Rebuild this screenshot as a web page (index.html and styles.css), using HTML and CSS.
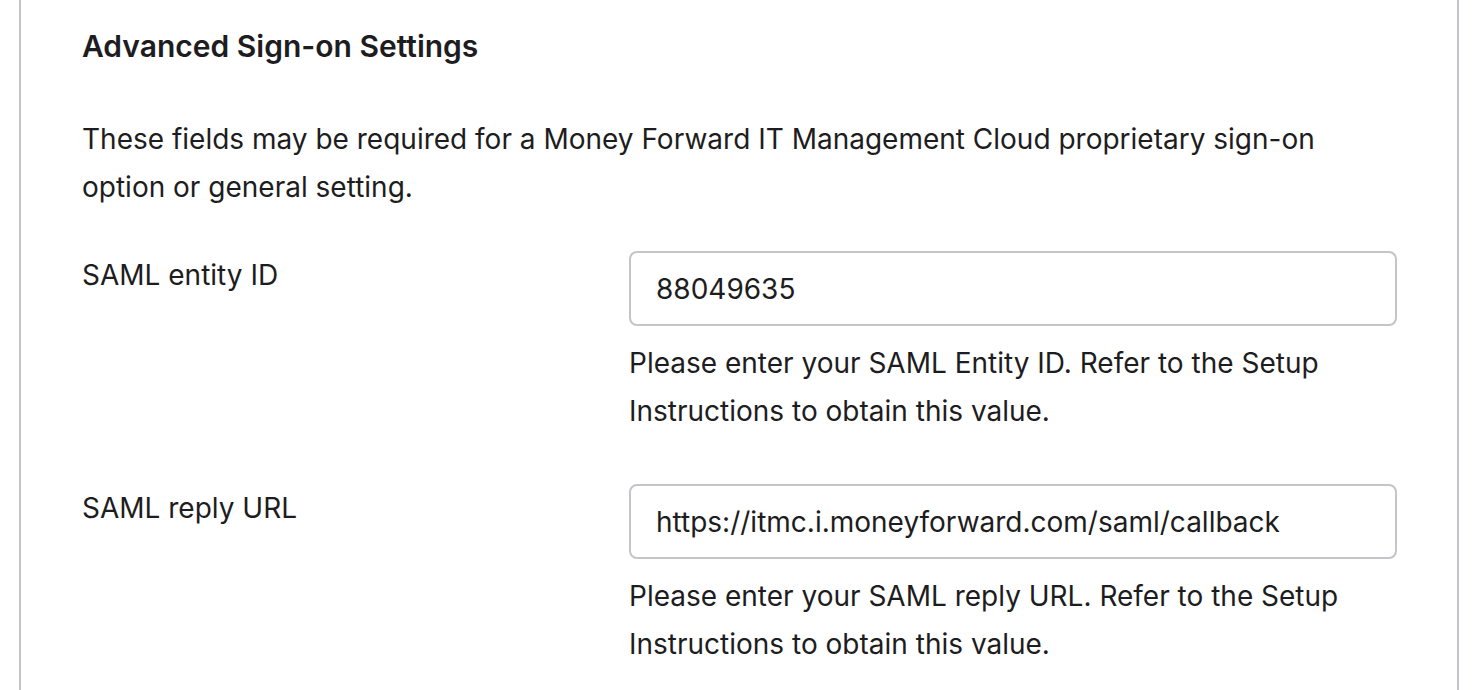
FILE: index.html
```html
<!DOCTYPE html>
<html lang="en">
<head>
    <meta charset="UTF-8">
    <meta name="viewport" content="width=device-width, initial-scale=1.0">
    <title>Advanced Sign-on Settings</title>
    <link rel="stylesheet" href="styles.css">
</head>
<body>
    <div class="panel">
        <h2>Advanced Sign-on Settings</h2>
        <p class="intro">These fields may be required for a Money Forward IT Management Cloud proprietary sign-on option or general setting.</p>

        <div class="field-row">
            <label for="entityId">SAML entity ID</label>
            <div class="field-control">
                <input type="text" id="entityId" value="88049635">
                <p class="help">Please enter your SAML Entity ID. Refer to the Setup Instructions to obtain this value.</p>
            </div>
        </div>

        <div class="field-row">
            <label for="replyUrl">SAML reply URL</label>
            <div class="field-control">
                <input type="text" id="replyUrl" value="https://itmc.i.moneyforward.com/saml/callback">
                <p class="help">Please enter your SAML reply URL. Refer to the Setup Instructions to obtain this value.</p>
            </div>
        </div>
    </div>
</body>
</html>
```

FILE: styles.css
```css
body {
    margin: 0;
    padding: 0 13px 0 19px;
    font-family: Inter, "Noto Sans", sans-serif;
    color: #1d1d21;
    background-color: white;
}
.panel {
    border-left: 2px solid #c4c4ca;
    border-right: 2px solid #c4c4ca;
    padding: 28px 60px 0 61px;
    height: 690px;
    box-sizing: border-box;
}
.panel h2 {
    margin: 0 0 51px;
    font-size: 30px;
    font-weight: 600;
    line-height: 36px;
}
.intro {
    margin: 0 0 40px;
    font-size: 28px;
    line-height: 48px;
    max-width: 1260px;
}
.field-row {
    display: grid;
    grid-template-columns: 547px 1fr;
    margin-bottom: 49px;
}
.field-row label {
    font-size: 28px;
    line-height: 48px;
}
.field-control input {
    display: block;
    width: 100%;
    box-sizing: border-box;
    height: 75px;
    padding: 0 25px;
    border: 2px solid #c4c4ca;
    border-radius: 8px;
    font-family: inherit;
    font-size: 28px;
    color: #1d1d21;
}
.help {
    margin: 13px 0 0;
    font-size: 28px;
    line-height: 48px;
    max-width: 740px;
}
```
